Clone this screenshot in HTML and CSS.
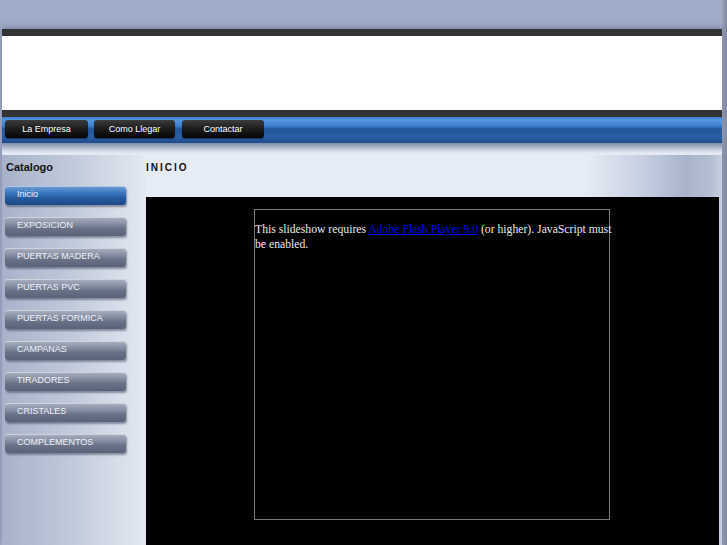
FILE: index.html
```html
<!DOCTYPE html>
<html>
<head>
<meta charset="utf-8">
<title>Catalogo</title>
<link rel="stylesheet" href="styles.css">
</head>
<body>
<div class="page">
  <div class="bar"></div>
  <div class="banner"></div>
  <div class="bar"></div>
  <nav class="nav">
    <a class="nav-btn w1" href="#">La Empresa</a>
    <a class="nav-btn w2" href="#">Como Llegar</a>
    <a class="nav-btn w3" href="#">Contactar</a>
  </nav>
  <div class="shade"></div>
  <div class="main">
    <aside class="side">
      <h2 class="side-title">Catalogo</h2>
      <ul class="menu">
        <li><a class="item active" href="#">Inicio</a></li>
        <li><a class="item" href="#">EXPOSICION</a></li>
        <li><a class="item" href="#">PUERTAS MADERA</a></li>
        <li><a class="item" href="#">PUERTAS PVC</a></li>
        <li><a class="item" href="#">PUERTAS FORMICA</a></li>
        <li><a class="item" href="#">CAMPANAS</a></li>
        <li><a class="item" href="#">TIRADORES</a></li>
        <li><a class="item" href="#">CRISTALES</a></li>
        <li><a class="item" href="#">COMPLEMENTOS</a></li>
      </ul>
    </aside>
    <section class="content">
      <h1 class="title">INICIO</h1>
      <div class="stage">
        <div class="slideshow">
          <p>This slideshow requires <a href="#">Adobe Flash Player 9.0</a> (or higher). JavaScript must be enabled.</p>
        </div>
      </div>
    </section>
  </div>
</div>
</body>
</html>
```

FILE: styles.css
```css
html, body {
  margin: 0;
  padding: 0;
}
body {
  background: linear-gradient(to right, #a0abc7 0, #a0abc7 722px, #9aa3ba 722px, #7f889e 727px);
  font-family: "Liberation Sans", Arial, sans-serif;
  height: 545px;
  overflow: hidden;
}
.page {
  margin: 29px 0 0 2px;
  width: 720px;
  box-shadow: 0 -2px 5px rgba(60, 70, 100, 0.35);
}
.bar {
  height: 7px;
  background: #333333;
}
.banner {
  height: 74px;
  background: #ffffff;
}
.nav {
  height: 26px;
  background: linear-gradient(to bottom, #3b7fd0 0, #5598e0 3px, #3d7fcc 9px, #24569a 12px, #2a5fa6 20px, #1f4c8a 26px);
  display: flex;
  align-items: flex-start;
  padding: 3px 0 0 3px;
  box-sizing: border-box;
  gap: 6px;
}
.nav-btn {
  height: 18px;
  line-height: 19px;
  border-radius: 3px;
  background: linear-gradient(to bottom, #3c3c3c 0, #1c1c1c 50%, #050505 100%);
  color: #ffffff;
  font-size: 9px;
  text-align: center;
  text-decoration: none;
  box-shadow: 0 1px 1px rgba(0, 0, 0, 0.4);
}
.w1 { width: 83px; }
.w2 { width: 81px; }
.w3 { width: 82px; margin-left: 1px; }
.shade {
  height: 12px;
  background: linear-gradient(to bottom, #7f8ca8 0, #aab4c9 4px, #dfe5ef 9px, #e7ecf4 12px);
}
.main {
  display: flex;
  height: 390px;
}
.side {
  width: 144px;
  flex: none;
  background: linear-gradient(to right, #a7b2ca 0, #c2cbdc 50%, #e4e9f2 100%);
}
.side-title {
  margin: 0;
  padding: 6px 0 0 4px;
  height: 25px;
  font-size: 11px;
  font-weight: bold;
  color: #111111;
  line-height: 13px;
}
.menu {
  list-style: none;
  margin: 0;
  padding: 0 0 0 3px;
  display: flex;
  flex-direction: column;
  gap: 12px;
}
.item {
  display: block;
  width: 121px;
  height: 19px;
  box-sizing: border-box;
  padding: 3px 0 0 12px;
  font-size: 9px;
  line-height: 11px;
  color: #eef1f7;
  text-decoration: none;
  border-radius: 3px;
  background: linear-gradient(to bottom, #aab1c2 0, #8890a4 35%, #6a7288 60%, #5a6279 100%);
  box-shadow: 1px 2px 2px rgba(40, 48, 70, 0.45), inset 0 1px 0 rgba(255, 255, 255, 0.45);
}
.item.active {
  background: linear-gradient(to bottom, #6f9fd6 0, #3c78c0 35%, #25599e 65%, #1d4a88 100%);
  color: #f3f7fc;
}
.content {
  flex: 1;
  display: flex;
  flex-direction: column;
  background: linear-gradient(to right, #e6ecf5 0, #e6ecf5 440px, #c4cde0 500px, #a8b3cb 540px, #b5bfd3 565px, #c7d0e0 576px);
}
.title {
  margin: 0;
  height: 42px;
  padding: 6px 0 0 0;
  box-sizing: border-box;
  font-size: 10px;
  font-weight: bold;
  letter-spacing: 2px;
  line-height: 13px;
  color: #111111;
}
.stage {
  flex: 1;
  width: 573px;
  background: #000000;
  padding: 12px 0 0 108px;
  box-sizing: border-box;
}
.slideshow {
  width: 356px;
  height: 311px;
  box-sizing: border-box;
  border: 1px solid #7a7a7a;
  font-family: "Liberation Serif", "Times New Roman", serif;
  font-size: 11.7px;
  line-height: 15px;
  color: #e8e8e8;
}
.slideshow p {
  margin: 12px -8px 0 0;
}
.slideshow a {
  color: #0000ee;
}
```
